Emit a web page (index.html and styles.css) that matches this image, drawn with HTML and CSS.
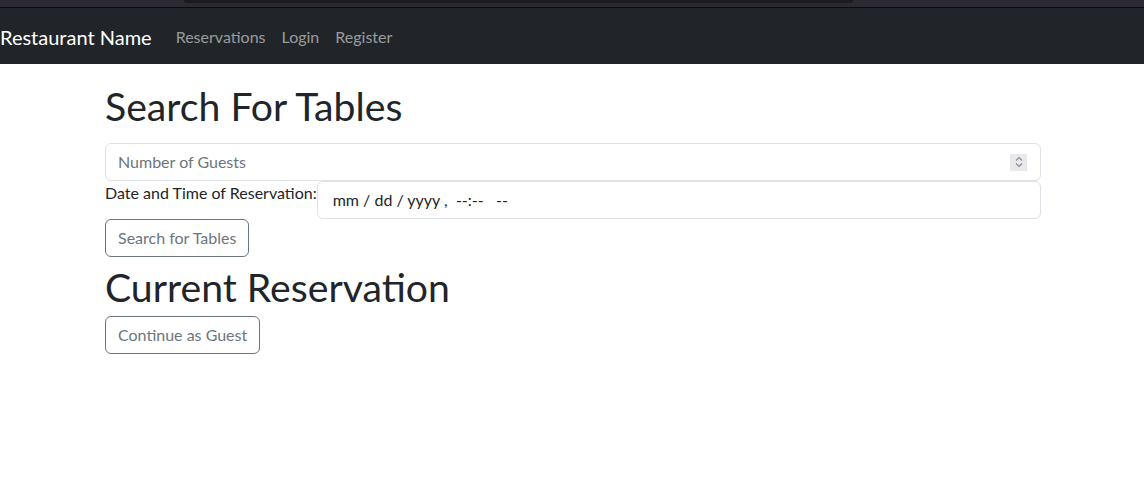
FILE: index.html
```html
<!DOCTYPE html>
<html lang="en">
<head>
<meta charset="utf-8">
<title>Restaurant</title>
<link rel="stylesheet" href="styles.css">
</head>
<body>
<div class="chrome"><div class="chrome-bar"></div></div>
<nav class="navbar">
  <a class="brand" href="#">Restaurant Name</a>
  <a class="nav-link" href="#">Reservations</a>
  <a class="nav-link" href="#">Login</a>
  <a class="nav-link" href="#">Register</a>
</nav>
<main class="container">
  <h1 class="title">Search For Tables</h1>
  <div class="field number-field">
    <span class="placeholder">Number of Guests</span>
    <span class="spinner">
      <svg width="10" height="14" viewBox="0 0 10 14"><path d="M2 5.5 L5 2.5 L8 5.5" fill="none" stroke="#8a8a8f" stroke-width="1.2"/><path d="M2 8.5 L5 11.5 L8 8.5" fill="none" stroke="#8a8a8f" stroke-width="1.2"/></svg>
    </span>
  </div>
  <div class="date-row">
    <label class="date-label">Date and Time of Reservation:</label>
    <div class="field date-field">mm / dd / yyyy ,&nbsp; --:--&nbsp;&nbsp; --</div>
  </div>
  <button class="btn">Search for Tables</button>
  <h2 class="subtitle">Current Reservation</h2>
  <button class="btn">Continue as Guest</button>
</main>
</body>
</html>
```
FILE: styles.css
```css
* { box-sizing: border-box; }
body {
  margin: 0;
  font-family: "Lato", "Open Sans", sans-serif;
  font-size: 16px;
  line-height: 1.5;
  color: #212529;
  background: #fff;
}
.chrome {
  height: 8px;
  background: #2b2a33;
  border-bottom: 1px solid #0c0c0d;
  padding-left: 184px;
}
.chrome-bar {
  width: 669px;
  height: 3px;
  background: #1c1b22;
  border-radius: 0 0 3px 3px;
}
.navbar {
  height: 56px;
  background: #212529;
  display: flex;
  align-items: center;
  padding-top: 2px;
}
.brand {
  color: #fff;
  font-size: 20px;
  text-decoration: none;
  margin-right: 16px;
  padding: 5px 0;
}
.nav-link {
  color: rgba(255,255,255,.55);
  text-decoration: none;
  padding: 8px;
}
.container {
  width: 936px;
  margin-left: 105px;
}
.title {
  font-size: 39.2px;
  font-weight: 400;
  line-height: 1.2;
  margin: 18px 0 14px;
}
.field {
  height: 38px;
  border: 1px solid #dee2e6;
  border-radius: 6px;
  display: flex;
  align-items: center;
  padding: 0 12px;
}
.number-field {
  justify-content: space-between;
}
.placeholder { color: #6c757d; }
.spinner {
  width: 17px;
  height: 17px;
  background: #e9e9ed;
  display: flex;
  align-items: center;
  justify-content: center;
  margin-right: 1px;
}
.date-row {
  display: flex;
}
.date-label {
  white-space: nowrap;
}
.date-field {
  flex: 1;
  padding-left: 15px;
}
.btn {
  font: inherit;
  color: #6c757d;
  background: transparent;
  border: 1px solid #6c757d;
  border-radius: 6px;
  padding: 6px 12px;
  line-height: 1.5;
}
.subtitle {
  font-size: 39.2px;
  font-weight: 400;
  line-height: 1.2;
  margin: 6px 0 6px;
}
```
